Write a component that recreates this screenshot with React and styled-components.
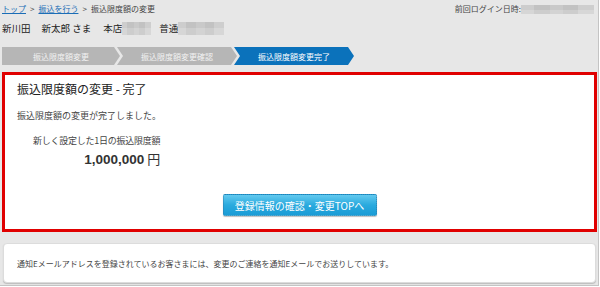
import styled, { createGlobalStyle } from "styled-components";

const GlobalStyle = createGlobalStyle`
  html, body {
    margin: 0;
    padding: 0;
    background: #ffffff;
  }
  body {
    font-family: "Noto Sans CJK JP", "Noto Sans", sans-serif;
    color: #333333;
  }
`;

const Frame = styled.div`
  box-sizing: border-box;
  width: 599px;
  height: 286px;
  padding: 0 1px 0 2px;
  background: #e7e7e7;
  border-right: 1px solid #c4c4c4;
  border-bottom: 1px solid #c4c4c4;
  overflow: hidden;
`;

const TopRow = styled.div`
  display: flex;
  justify-content: space-between;
  align-items: center;
  height: 14px;
  padding-top: 2px;
  font-size: 8px;
  line-height: 14px;
  color: #444;
`;

const Crumbs = styled.div`
  display: flex;
  align-items: center;
  gap: 4px;
`;

const CrumbLink = styled.a`
  color: #1b6db6;
  text-decoration: underline;
`;

const LastLogin = styled.div`
  display: flex;
  align-items: center;
  padding-right: 3px;
`;

// blurred-out personal data
const Mosaic = styled.span`
  display: inline-block;
  width: ${(p) => p.w}px;
  height: ${(p) => p.h}px;
  background:
    linear-gradient(90deg, rgba(255,255,255,0.18) 0 18%, transparent 18% 40%, rgba(255,255,255,0.12) 40% 58%, transparent 58% 78%, rgba(255,255,255,0.2) 78%),
    linear-gradient(180deg, #c2c2c2 0 50%, #cdcdcd 50%);
`;

const NameRow = styled.div`
  display: flex;
  align-items: center;
  height: 22px;
  margin-top: 1px;
  font-size: 9.5px;
  line-height: 22px;
  color: #222;
`;

const NamePart = styled.span`
  margin-left: ${(p) => p.gap || 0}px;
`;

const Steps = styled.div`
  display: flex;
  height: 18px;
  margin-top: 8px;
`;

const Step = styled.div`
  width: ${(p) => (p.first ? 118 : 120)}px;
  margin-left: ${(p) => (p.first ? 0 : -3)}px;
  height: 18px;
  display: flex;
  align-items: center;
  justify-content: center;
  font-size: 8px;
  color: ${(p) => (p.active ? "#ffffff" : "#f2f2f2")};
  background: ${(p) => (p.active ? "#0b72bb" : "#b6b6b6")};
  clip-path: ${(p) =>
    p.first
      ? "polygon(0 0, calc(100% - 6px) 0, 100% 50%, calc(100% - 6px) 100%, 0 100%)"
      : "polygon(0 0, calc(100% - 6px) 0, 100% 50%, calc(100% - 6px) 100%, 0 100%, 6px 50%)"};
`;

const ResultBox = styled.section`
  box-sizing: border-box;
  height: 160px;
  margin-top: 7px;
  padding: 5px 12px 0;
  background: #ffffff;
  border: 3px solid #e00000;
`;

const Title = styled.h2`
  margin: 0;
  font-size: 12px;
  font-weight: normal;
  line-height: 18px;
  color: #222;
`;

const Message = styled.p`
  margin: 11px 0 0;
  font-size: 9px;
  line-height: 14px;
  color: #444;
`;

const LimitBlock = styled.div`
  display: inline-block;
  margin: 11px 0 0 16px;
  text-align: right;
`;

const LimitLabel = styled.div`
  font-size: 9px;
  letter-spacing: -0.25px;
  line-height: 14px;
  color: #444;
`;

const LimitAmount = styled.div`
  margin-top: 2px;
  font-size: 13px;
  line-height: 18px;
  color: #333;
  b {
    font-family: "Liberation Sans", "Noto Sans", sans-serif;
    font-size: 13.5px;
    font-weight: bold;
    margin-right: 3px;
  }
`;

const ButtonRow = styled.div`
  display: flex;
  justify-content: center;
  margin-top: 25px;
`;

const TopButton = styled.button`
  box-sizing: border-box;
  width: 154px;
  height: 22px;
  padding: 0;
  font-family: inherit;
  font-size: 10px;
  color: #ffffff;
  background: linear-gradient(180deg, #62c9ef 0%, #2aaade 50%, #1a9cd6 100%);
  border: 1px dotted #2c7fae;
  border-radius: 2px;
  box-shadow: 0 1px 1px rgba(0, 0, 0, 0.25);
`;

const Notice = styled.div`
  box-sizing: border-box;
  height: 40px;
  margin: 11px 1px 0 1px;
  padding-left: 13px;
  display: flex;
  align-items: center;
  font-size: 8px;
  color: #444;
  background: #ffffff;
  border: 1px solid #dcdcdc;
  border-radius: 4px;
  box-shadow: 0 1px 1px #bdbdbd;
`;

export default function App() {
  return (
    <>
      <GlobalStyle />
      <Frame>
        <TopRow>
          <Crumbs>
            <CrumbLink>トップ</CrumbLink>
            <span>&gt;</span>
            <CrumbLink>振込を行う</CrumbLink>
            <span>&gt;</span>
            <span>振込限度額の変更</span>
          </Crumbs>
          <LastLogin>
            前回ログイン日時:
            <Mosaic w={73} h={9} />
          </LastLogin>
        </TopRow>
        <NameRow>
          <NamePart>新川田</NamePart>
          <NamePart gap={11}>新太郎 さま</NamePart>
          <NamePart gap={12}>本店</NamePart>
          <Mosaic w={29} h={13} />
          <NamePart gap={8}>普通</NamePart>
          <Mosaic w={46} h={13} />
        </NameRow>
        <Steps>
          <Step first>振込限度額変更</Step>
          <Step>振込限度額変更確認</Step>
          <Step active>振込限度額変更完了</Step>
        </Steps>
        <ResultBox>
          <Title>振込限度額の変更 - 完了</Title>
          <Message>振込限度額の変更が完了しました。</Message>
          <LimitBlock>
            <LimitLabel>新しく設定した1日の振込限度額</LimitLabel>
            <LimitAmount>
              <b>1,000,000</b>円
            </LimitAmount>
          </LimitBlock>
          <ButtonRow>
            <TopButton>登録情報の確認・変更TOPへ</TopButton>
          </ButtonRow>
        </ResultBox>
        <Notice>
          通知Eメールアドレスを登録されているお客さまには、変更のご連絡を通知Eメールでお送りしています。
        </Notice>
      </Frame>
    </>
  );
}
